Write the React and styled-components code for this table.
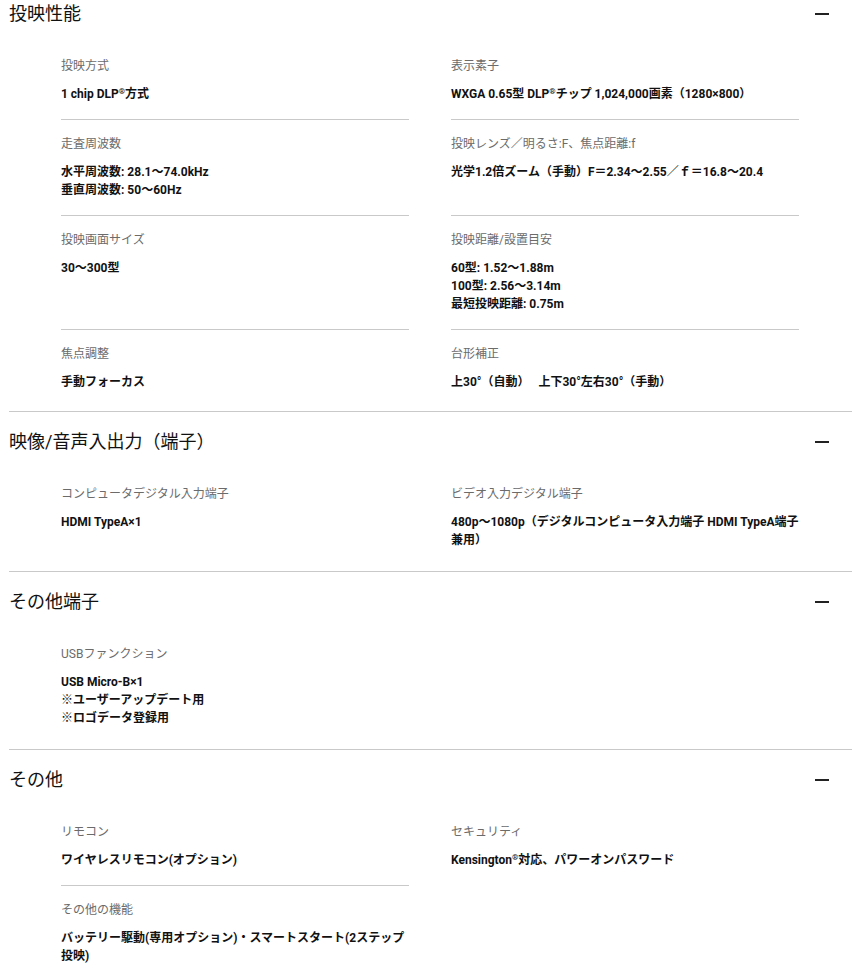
import styled, { createGlobalStyle } from 'styled-components';

const GlobalStyle = createGlobalStyle`
  body {
    margin: 0;
    background: #fff;
    font-family: Roboto, "Noto Sans CJK JP", sans-serif;
    color: #111;
  }
`;

const Page = styled.div`
  margin: 0 6px 0 9px;
`;

const Section = styled.section`
  padding: ${(p) => (p.first ? '4px 0 4px' : '20px 0 6px')};
  border-bottom: ${(p) => (p.last ? 'none' : '1px solid #c9c9c9')};
`;

const Header = styled.div`
  display: flex;
  align-items: center;
  justify-content: space-between;
  padding-right: 23px;
`;

const Title = styled.h2`
  margin: 0;
  font-size: 18px;
  line-height: 20px;
  font-weight: 400;
  color: #111;
`;

const Toggle = styled.span`
  width: 14px;
  height: 2px;
  background: #222;
`;

const Grid = styled.div`
  display: grid;
  grid-template-columns: 1fr 1fr;
  column-gap: 42px;
  padding: 18px 53px 0 52px;
`;

const Cell = styled.div`
  padding: 15px 0 16px;
  border-bottom: ${(p) => (p.divided ? '1px solid #c9c9c9' : 'none')};
`;

const Label = styled.div`
  font-size: 12px;
  line-height: 18px;
  color: #6b6b6b;
  margin-bottom: 10px;
`;

const Value = styled.div`
  font-size: 12px;
  line-height: 18px;
  font-weight: 700;
  color: #111;
`;

const Reg = styled.sup`
  font-size: 8px;
  line-height: 0;
  vertical-align: 4px;
`;

const sections = [
  {
    title: '投映性能',
    rows: [
      [
        { label: '投映方式', value: ['1 chip DLP®方式'] },
        { label: '表示素子', value: ['WXGA 0.65型 DLP®チップ 1,024,000画素（1280×800）'] },
      ],
      [
        { label: '走査周波数', value: ['水平周波数: 28.1～74.0kHz', '垂直周波数: 50～60Hz'] },
        { label: '投映レンズ／明るさ:F、焦点距離:f', value: ['光学1.2倍ズーム（手動）F＝2.34～2.55／ｆ＝16.8～20.4'] },
      ],
      [
        { label: '投映画面サイズ', value: ['30～300型'] },
        { label: '投映距離/設置目安', value: ['60型: 1.52～1.88m', '100型: 2.56～3.14m', '最短投映距離: 0.75m'] },
      ],
      [
        { label: '焦点調整', value: ['手動フォーカス'] },
        { label: '台形補正', value: ['上30°（自動）　 上下30°左右30°（手動）'] },
      ],
    ],
  },
  {
    title: '映像/音声入出力（端子）',
    rows: [
      [
        { label: 'コンピュータデジタル入力端子', value: ['HDMI TypeA×1'] },
        { label: 'ビデオ入力デジタル端子', value: ['480p～1080p（デジタルコンピュータ入力端子 HDMI TypeA端子兼用）'] },
      ],
    ],
  },
  {
    title: 'その他端子',
    rows: [
      [
        { label: 'USBファンクション', value: ['USB Micro-B×1', '※ユーザーアップデート用', '※ロゴデータ登録用'] },
        null,
      ],
    ],
  },
  {
    title: 'その他',
    rows: [
      [
        { label: 'リモコン', value: ['ワイヤレスリモコン(オプション)'] },
        { label: 'セキュリティ', value: ['Kensington®対応、パワーオンパスワード'] },
      ],
      [
        { label: 'その他の機能', value: ['バッテリー駆動(専用オプション)・スマートスタート(2ステップ投映)'] },
        null,
      ],
    ],
  },
];

// ® is set small and raised, as on the spec page
const renderLine = (line) =>
  line.split('®').flatMap((part, i) => (i === 0 ? [part] : [<Reg key={i}>®</Reg>, part]));

function App() {
  return (
    <Page>
      <GlobalStyle />
      {sections.map((section, si) => (
        <Section key={section.title} first={si === 0} last={si === sections.length - 1}>
          <Header>
            <Title>{section.title}</Title>
            <Toggle />
          </Header>
          <Grid>
            {section.rows.map((row, ri) =>
              row.map((item, ci) => {
                const below = section.rows[ri + 1] && section.rows[ri + 1][ci];
                return item ? (
                  <Cell key={`${ri}-${ci}`} divided={!!below}>
                    <Label>{item.label}</Label>
                    <Value>
                      {item.value.map((line) => (
                        <div key={line}>{renderLine(line)}</div>
                      ))}
                    </Value>
                  </Cell>
                ) : (
                  <div key={`${ri}-${ci}`} />
                );
              })
            )}
          </Grid>
        </Section>
      ))}
    </Page>
  );
}

export default App;
